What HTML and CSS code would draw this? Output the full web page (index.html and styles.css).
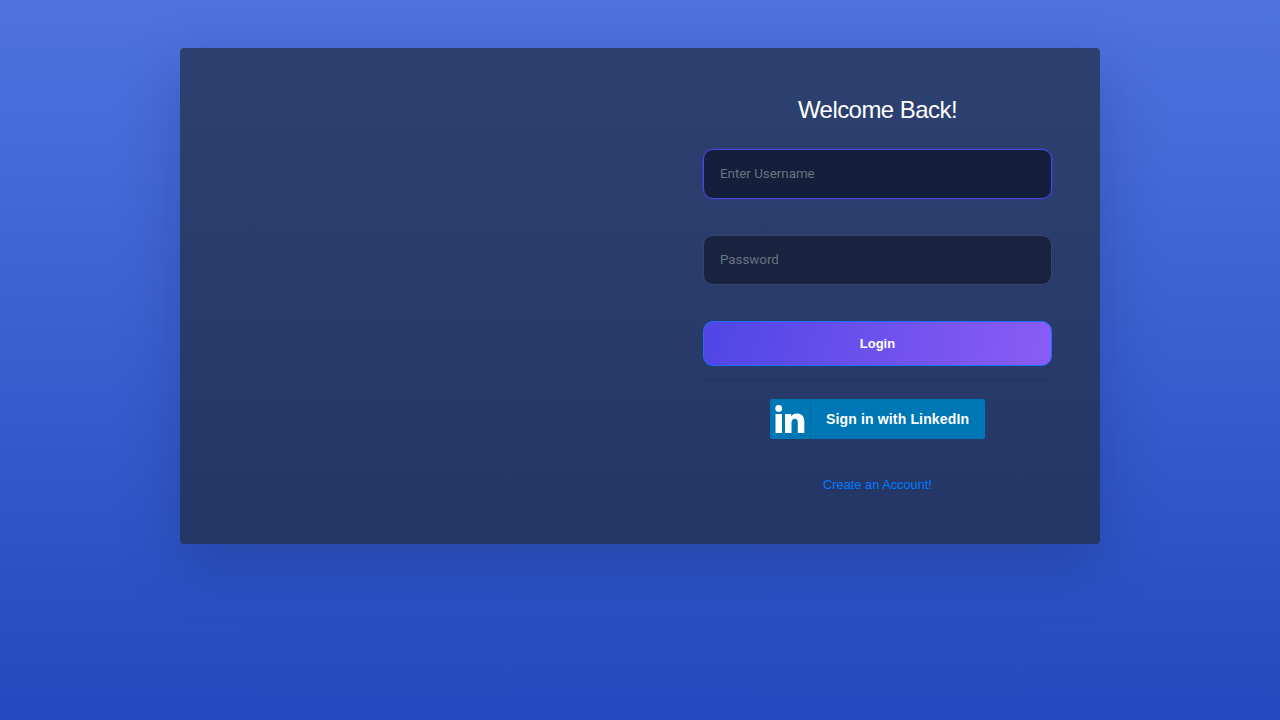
FILE: index.html
```html
<!DOCTYPE html>
<html lang="en">
<head>
<meta charset="utf-8">
<title>Login</title>
<link rel="stylesheet" href="styles.css">
</head>
<body>
<main class="card">
  <form class="form">
    <h1 class="title">Welcome Back!</h1>
    <input class="field field-focus" type="text" placeholder="Enter Username">
    <input class="field" type="password" placeholder="Password">
    <button class="login" type="button">Login</button>
    <hr class="rule rule-top">
    <a class="linkedin" href="#">
      <span class="li-mark">
        <svg class="li-icon" viewBox="0 0 30 28" width="30" height="28" aria-hidden="true">
          <circle cx="3.700" cy="3.400" r="3.400" fill="#fff"/>
          <rect x="0.500" y="9" width="6.500" height="19" fill="#fff"/>
          <path d="M10 9h6.200v2.600c1-1.800 3-3.100 5.600-3.100 5 0 7.500 3 7.500 7.800V28h-6.500V17.500c0-2.500-.9-3.700-3-3.700-2.300 0-3.300 1.700-3.300 4V28H10z" fill="#fff"/>
        </svg>
      </span>
      <span class="li-text">Sign in with LinkedIn</span>
    </a>
    <hr class="rule rule-bottom">
    <a class="create" href="#">Create an Account!</a>
  </form>
</main>
</body>
</html>
```
FILE: styles.css
```css
* { box-sizing: border-box; }
html, body { height: 100%; }
body {
  margin: 0;
  height: 720px;
  overflow: hidden;
  padding-top: 48px;
  background: linear-gradient(180deg, #4e73df 0%, #224abe 100%);
  font-family: "Liberation Sans", Arial, sans-serif;
}
.card {
  width: 920px;
  height: 496px;
  margin: 0 auto;
  display: flex;
  justify-content: flex-end;
  padding: 48px 48px 0 0;
  border-radius: 4px;
  background: linear-gradient(180deg, #2d4170 0%, #243665 100%);
  box-shadow: 0 20px 60px rgba(20, 30, 80, 0.26);
}
.form {
  width: 349px;
  display: flex;
  flex-direction: column;
  align-items: center;
}
.title {
  margin: 0 0 25px;
  font-size: 24px;
  line-height: 28px;
  font-weight: 400;
  letter-spacing: -0.55px;
  color: #fff;
}
.field {
  display: block;
  width: 100%;
  height: 50px;
  margin-bottom: 36px;
  padding: 0 16px 1px;
  border: 1px solid #354468;
  border-radius: 10px;
  background: #18243f;
  font-family: Roboto, sans-serif;
  font-size: 13.330px;
  color: #fff;
  outline: none;
}
.field::placeholder { color: #6b7280; opacity: 1; }
.field-focus {
  background: #141f3c;
  border-color: #4f46e5;
  box-shadow: 0 0 3px rgba(79, 70, 229, 0.5);
}
.login {
  width: 100%;
  height: 45px;
  border: 1px solid #1d6ffa;
  border-radius: 10px;
  background: linear-gradient(100deg, #4f46e5 0%, #8b5cf6 100%);
  font-family: "Liberation Sans", Arial, sans-serif;
  font-size: 13px;
  font-weight: 700;
  color: #fff;
}
.rule {
  width: 100%;
  margin: 0;
  border: 0;
  border-top: 1px solid rgba(0, 0, 0, 0.07);
}
.rule-top { margin-top: 14px; margin-bottom: 18px; }
.rule-bottom { margin-top: 14px; margin-bottom: 23px; }
.linkedin {
  display: flex;
  align-items: stretch;
  width: 215px;
  height: 40px;
  border-radius: 2px;
  background: #0077b5;
  text-decoration: none;
}
.li-mark {
  width: 41px;
  display: flex;
  align-items: flex-end;
  padding: 0 0 6px 5px;
  border-right: 1px solid #0a6a9f;
}
.li-text {
  flex: 1;
  padding-left: 15px;
  font-size: 14px;
  font-weight: 700;
  letter-spacing: 0.15px;
  line-height: 40px;
  color: #fff;
  white-space: nowrap;
}
.create {
  font-size: 12.800px;
  line-height: 16px;
  color: #007bff;
  text-decoration: none;
}
```
